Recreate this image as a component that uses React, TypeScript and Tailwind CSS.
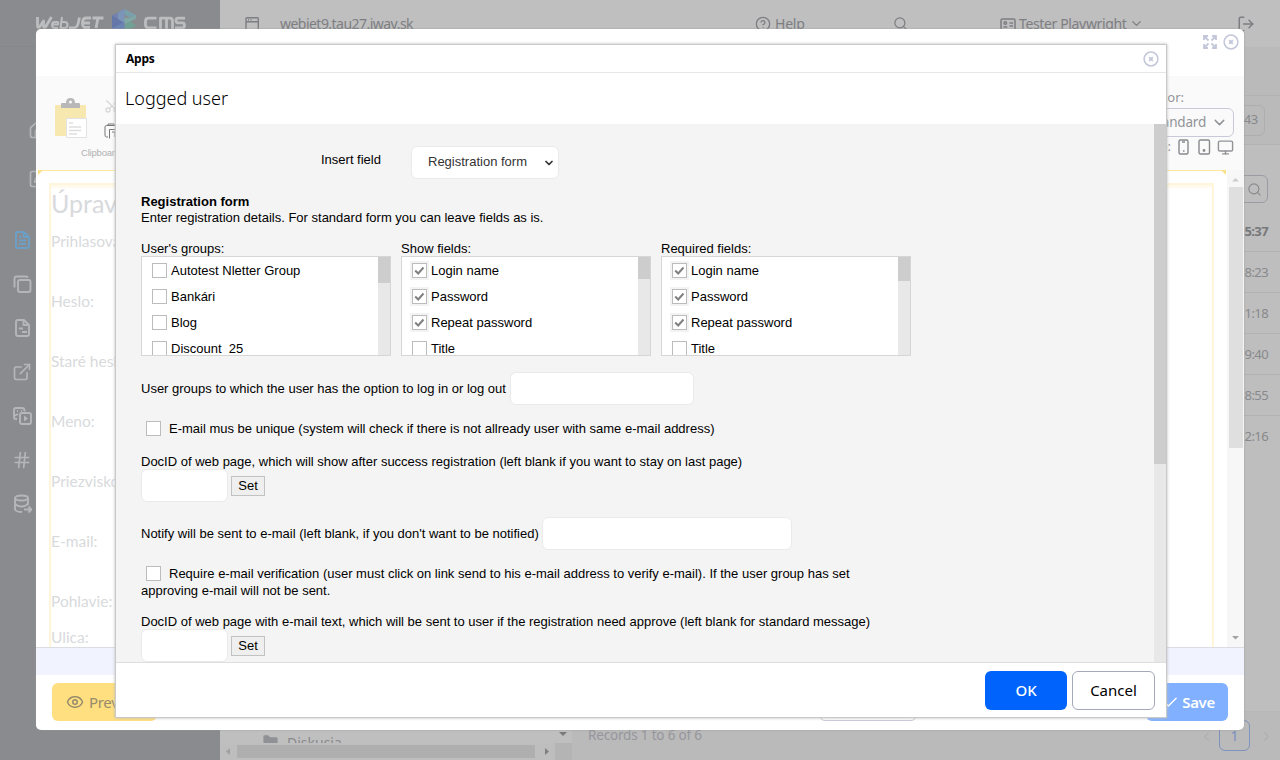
import React from "react";
import {
  ExternalLink, Hash, House, SquarePen, Search, CircleHelp, LogOut,
  ChevronDown, ChevronLeft, ChevronRight, Monitor,
  Eye, Check, Scissors, Folder,
} from "lucide-react";

const times = ["5:37", "8:23", "1:18", "9:40", "8:55", "2:16"];

function Logo() {
  return (
    <svg className="ml-[34px] mt-[6px] h-[32px] w-[154px]" viewBox="34 6 154 32">
      <g fill="none" stroke="#bcbdbf" strokeWidth="2.8" strokeLinejoin="round" strokeLinecap="butt">
        <path d="M37.500 17v9q0 2 2 1l4-6v5q0 2 2 1l6-10" />
        <path d="M52 24.500h6q1-2.500-1-2.500h-2q-3 0-3 3t3 3h3M62 17l-1.500 11h4q3 0 3-3t-3-3h-3" strokeWidth="2" />
        <path d="M69 28h4q4 0 5-4l1.500-6.500M91 18h-5q-3 0-3.500 4t2 5.500H90M83 23h7M92.500 18h11M98 18l-2 10" />
        <path d="M156.500 18.200h-8q-3 0-3 3v3.600q0 3 3 3h8M160.500 29V18.200h9.500q2.500 0 2.500 3V29M166.500 19v10M185 18.200h-7q-2 0-2 2.300t2 2.300h4.500q2 0 2 2.500t-2 2.500H175" />
      </g>
      <path fill="#7383ad" d="M112 15.500l12.500-6.500v7L112 22.500z" />
      <path fill="#6577a9" d="M112 15.500l12.500 7-12.500 6z" />
      <path fill="#7b95b9" d="M124.500 9v14l-6.500-4v-6.500z" />
      <path fill="#7aa0ac" d="M124.500 9l11.500 6-5.500 3-6-3.500z" />
      <path fill="#80a9a6" d="M136 15v3.500l-11.500 6V18l6 0z" />
      <path fill="#71a095" d="M124.500 24.500l5.500-3 6 3.500-6 5h-5.500z" />
      <path fill="#6c84b3" d="M112 28.500l12.500-6.500v8H112z" />
    </svg>
  );
}

function DocIcon({ className = "", alt = false }: { className?: string; alt?: boolean }) {
  return (
    <svg className={className} width="20" height="20" viewBox="0 0 20 20" fill="none" stroke="currentColor" strokeWidth="1.900" strokeLinejoin="round">
      <path d="M12 2H6Q4 2 4 4v12q0 2 2 2h9q2 0 2-2V7zM11.500 2v5h5" />
      {alt ? <path d="M7 10.500h4M10 14h5" /> : <path d="M7 10.500h7M7 14h7M7 7h2" />}
    </svg>
  );
}

function Sidebar() {
  return (
    <aside className="flex w-[220px] flex-col bg-[#8a8b8f] text-[#b5b6b9]">
      <div className="h-[47px] border-b border-[#86878b]"><Logo /></div>
      <div className="ml-[28px] mt-[73px] flex h-[69px] flex-col justify-between">
        <House size={20} /><SquarePen size={20} />
      </div>
      <div className="ml-[12px] mt-[41px] flex flex-col gap-6">
        <DocIcon className="text-[#6c9fc6]" />
        <svg width="20" height="20" viewBox="0 0 20 20" fill="none" stroke="currentColor" strokeWidth="1.900"><rect x="6" y="6" width="12.500" height="12" rx="2" /><path d="M2.500 13.500V4.500q0-2 2-2h9.500q1.500 0 1.500 1.500" /></svg>
        <DocIcon alt />
        <ExternalLink size={20} />
        <svg width="20" height="20" viewBox="0 0 20 20" fill="none" stroke="currentColor" strokeWidth="1.900">
          <path d="M5 13H4Q2 13 2 11V4Q2 2 4 2H10Q12.500 2 12.500 4.500V5.500M2 10l4-2M5 5h1M9 5h1" />
          <rect x="8" y="7" width="11" height="11" rx="2" /><path fill="currentColor" strokeWidth="0" d="M12 9.500v6l4-3z" />
        </svg>
        <Hash size={20} />
        <svg width="20" height="20" viewBox="0 0 20 20" fill="none" stroke="currentColor" strokeWidth="1.900">
          <ellipse cx="9.500" cy="4" rx="6.500" ry="2.500" /><path d="M3 4v11.500q1 2.500 7 2.500M16 4V11M3 9.500q2 3 6.500 3t6.500-3M12 15.500h7M16.500 12.500l3 3-3 3" />
        </svg>
      </div>
    </aside>
  );
}

function TopBar() {
  return (
    <header className="flex h-[47px] shrink-0 items-center bg-[#bfbfbf] pl-[24px] text-[14px] text-[#7d7e82]">
      <svg width="16" height="16" viewBox="0 0 16 16" fill="none" stroke="currentColor" strokeWidth="1.400"><rect x="2" y="1.700" width="12.300" height="13" rx="1" /><path d="M2 5.700h12M4 3.700h1M6.500 3.700h1" /></svg>
      <span className="ml-[20px] w-[475px] tracking-[-0.53px]">webjet9.tau27.iway.sk</span>
      <span className="flex w-[138px] items-center gap-1 tracking-[-0.2px]"><CircleHelp size={16} />Help</span>
      <Search size={15} />
      <span className="ml-[92px] flex w-[237px] items-center gap-[3px] whitespace-nowrap tracking-[-0.36px]">
        <svg className="shrink-0" width="16" height="16" viewBox="0 0 16 16" fill="none" stroke="currentColor" strokeWidth="1.500"><rect x="1" y="3" width="14" height="11" rx="1.500" /><circle cx="5.300" cy="7" r="1.300" /><path d="M3.300 11h4M9.500 7h3.500M9.500 10h3.500" /></svg>
        Tester Playwright<ChevronDown size={15} />
      </span>
      <LogOut size={18} />
    </header>
  );
}

function BackPage() {
  return (
    <div className="flex h-[760px] w-[1280px]">
      <Sidebar />
      <main className="flex flex-1 flex-col bg-[#bebebe] text-[#88898c]">
        <TopBar />
        <div className="h-[49px] border-b border-[#b2b2b2] bg-[#bababa]" />
        <div className="flex h-[49px] items-center justify-end border-b border-[#b2b2b2] bg-[#bababa] pr-[15px]">
          <span className="flex h-[31px] w-[80px] items-center justify-end rounded-[6px] border border-[#aeaeb1] pr-[6px] text-[13px] tracking-[-0.3px]">43</span>
        </div>
        <div className="flex h-[66px] items-center justify-end pr-[12px]">
          <span className="mt-[22px] flex h-[28px] w-[70px] items-center justify-end rounded-[6px] border border-[#9b9ca3] pr-[5px]"><Search size={15} strokeWidth={1.800} /></span>
        </div>
        <div className="flex flex-col text-[13px]">
          {times.map((t, i) => (
            <div key={t} className={"flex h-[41px] items-center justify-end pr-[12px] tracking-[-0.6px] " + (i === 0 ? "border-b border-[#b2b2b2] pt-[1px] font-bold text-[#77787b]" : i < 5 ? "border-b border-[#b2b2b2] pt-[1px]" : "")}>{t}</div>
          ))}
        </div>
        <div className="mt-auto flex h-[49px]">
          <div className="flex w-[352px] flex-col">
            <div className="flex h-[32px] items-end overflow-hidden bg-[#bfbfbf]">
              <div className="ml-[42px] flex h-[12px] w-[292px] items-start gap-2 overflow-hidden pt-[2px] text-[14px] leading-[20px]">
                <Folder size={17} fill="#909194" strokeWidth={0} className="shrink-0" />
                <span>Diskusia</span>
              </div>
              <svg width="18" height="32" viewBox="0 0 18 32"><path fill="#7b7b7b" d="M5 21h8l-4 4z" /></svg>
            </div>
            <div className="flex h-[17px] items-center">
              <svg width="17" height="17" viewBox="0 0 17 17"><path fill="#a0a0a0" d="M10 5v7L6 8.500z" /></svg>
              <div className="h-[13px] w-[298px] bg-[#afafaf]" />
              <svg width="20" height="17" viewBox="0 0 20 17"><path fill="#808080" d="M10 5v7l4-3.500z" /></svg>
              <div className="ml-auto h-full w-[17px] bg-[#b4b4b4]" />
            </div>
          </div>
          <div className="flex flex-1 items-center border-t border-[#b7b7b7] bg-[#bababa] pl-[16px]">
            <span className="mt-[-2px] flex-1 text-[13.500px] tracking-[-0.18px] text-[#95969c]">Records 1 to 6 of 6</span>
            <ChevronLeft size={15} className="mr-[5px] text-[#b0b0b0]" />
            <span className="mt-[-1px] flex h-[31px] w-[31px] items-center justify-center rounded-[6px] border border-[#7e92ba] text-[14px] text-[#7890bd]">1</span>
            <ChevronRight size={15} className="ml-[9px] mr-[6px] text-[#b0b0b0]" />
          </div>
        </div>
      </main>
    </div>
  );
}

const editorRows: [string, string][] = [
  ["Prihlasovacie", "h-[60px]"], ["Heslo:", "h-[60px]"], ["Staré heslo:", "h-[60px]"], ["Meno:", "h-[60px]"],
  ["Priezvisko:", "h-[60px]"], ["E-mail:", "h-[60px]"], ["Pohlavie:", "h-[36px]"], ["Ulica:", "h-[24px]"],
];

function CloseIcon() {
  return (
    <svg width="16" height="16" viewBox="0 0 16 16" fill="none" stroke="#c3c7d9"><circle cx="8" cy="8" r="6.900" strokeWidth="1.500" /><path d="M6.200 6.200l3.600 3.600M9.800 6.200L6.200 9.800" strokeWidth="1.800" /></svg>
  );
}

function ExpandIcon() {
  return (
    <svg width="16" height="16" viewBox="0 0 16 16" stroke="#c3c7d9" fill="none" strokeWidth="1.800">
      <path d="M2 6V2h4M2 2l4.500 4.500M10 2h4v4M14 2L9.500 6.500M2 10v4h4M2 14l4.500-4.500M10 14h4v-4M14 14L9.500 9.500" />
    </svg>
  );
}

function EditorDialog() {
  return (
    <section className="absolute left-[36px] top-[29px] flex h-[701px] w-[1208px] flex-col overflow-hidden rounded-[5px] bg-white shadow-[0_0_2px_#999]">
      <div className="flex h-[47px] shrink-0 justify-end gap-[5px] pr-[5px] pt-[5px]">
        <ExpandIcon />
        <CloseIcon />
      </div>
      <div className="flex h-[94px] shrink-0 justify-between bg-[#fafafa]">
        <div className="flex flex-col">
          <div className="ml-[18px] mt-[22px] flex gap-[16px]">
            <svg width="34" height="42" viewBox="0 0 34 42">
              <rect x="1" y="7" width="31" height="31" rx="1" fill="#f6e8ae" />
              <path fill="#b8b8b8" d="M7 10V6q0-1 1-1h4q0-5 4.500-5T21 5h4q1 0 1 1v4z" /><circle cx="16.500" cy="4" r="1.500" fill="#fafafa" />
              <path fill="#fff" stroke="#e2e2e2" d="M12.500 20.500h20v19h-20z" />
              <path stroke="#dedede" strokeWidth="1.500" d="M15 25h4M15 29h12M15 32.500h12M15 36h8" />
            </svg>
            <div className="flex flex-col gap-[9px] text-[#d8d8d8]">
              <Scissors size={16} className="-rotate-90" />
              <svg width="16" height="16" viewBox="0 0 16 16" fill="none" stroke="#777"><path d="M4 14H2.500Q1 14 1 12V4q0-1.500 1.500-1.500H12M4 2.500V1h6v2M5.500 15.500v-9H15M8 9h6M11 9v5" /></svg>
            </div>
          </div>
          <span className="ml-[45px] mt-[7px] font-['Liberation_Sans',sans-serif] text-[9.500px] leading-[12px] tracking-[-0.2px] text-[#b0b0b0]">Clipboard</span>
        </div>
        <div className="flex flex-col items-end pr-[10px] pt-[11px] text-[13px] text-[#929397]">
          <span className="mr-[50px] leading-[20px]">Editor:</span>
          <span className="mt-[1px] flex h-[29px] w-[110px] items-center justify-end gap-[5px] rounded-[6px] border border-[#c8cada] pr-[5px] text-[13.500px] tracking-[-0.2px]">Standard<ChevronDown size={17} /></span>
          <span className="mt-[1px] flex h-[18px] items-center">
            Size:
            <svg className="ml-[6px]" width="12" height="18" viewBox="0 0 12 18" fill="none" stroke="#88898d" strokeWidth="1.400"><rect x="2" y="2" width="9" height="14" rx="1.500" /><path d="M6 13h1.500M5 4h3" /></svg>
            <svg className="ml-[9px]" width="13" height="18" viewBox="0 0 13 18" fill="none" stroke="#88898d" strokeWidth="1.400"><rect x="1" y="2" width="10.500" height="14" rx="1.500" /><circle cx="6" cy="12.500" r=".7" /></svg>
            <Monitor size={17} className="ml-[6px]" />
          </span>
        </div>
      </div>
      <div className="flex h-[477px] shrink-0">
        <div className="flex-1 overflow-hidden bg-white">
          <svg className="ml-[2px] block" width="1188" height="5"><path d="M0 .5H1188" stroke="#fde79b" /><path d="M0 0h5L0 5zM1188 0v5l-5-5z" fill="#fbe08a" /></svg>
          <div className="ml-[13px] mt-[8px] flex h-[470px] w-[1165px] flex-col border-2 border-[#fff5da] font-['Lato',sans-serif] text-[#d8dadc] shadow-[inset_0_3px_2px_#fffaeb]">
            <div className="h-[40px] text-[25px] leading-[36px]">Úprava</div>
            {editorRows.map(([label, h]) => (
              <div key={label} className={"shrink-0 text-[15.500px] leading-[32px] " + h}>{label}</div>
            ))}
          </div>
        </div>
        <div className="flex w-[17px] flex-col items-center bg-[#f7f7f7]">
          <svg width="16" height="17" viewBox="0 0 16 17"><path fill="#ccc" d="M4 11.500h7L7.500 8z" /></svg>
          <div className="h-[261px] w-[14px] bg-[#dfdfdf]" />
          <svg className="mt-auto" width="16" height="17" viewBox="0 0 16 17"><path fill="#a3a3a3" d="M4 6h7L7.500 9.500z" /></svg>
        </div>
      </div>
      <div className="h-[28px] shrink-0 border-t border-[#dcdde2] bg-[#f1f4fe]" />
      <div className="flex h-[55px] shrink-0 items-start px-[16px] pt-[8px] text-[15px]">
        <span className="flex h-[38px] w-[105px] items-center gap-[5px] rounded-[6px] bg-[#ffdf7f] pl-[14px] tracking-[-0.3px] text-[#968c6c]"><Eye size={18} />Preview</span>
        <span className="ml-[662px] h-[38px] w-[98px] rounded-[6px] border border-[#c8cada]" />
        <span className="ml-auto flex h-[38px] w-[82px] items-center justify-end gap-[3px] rounded-[6px] bg-[#80b0ff] pr-[13px] font-semibold tracking-[-0.3px] text-white"><Check size={17} />Save</span>
      </div>
    </section>
  );
}

function Box({ checked = false }: { checked?: boolean }) {
  return (
    <span className={"flex h-[15px] w-[15px] shrink-0 items-center justify-center border border-[#bcbcbc] bg-white " + (checked ? "shadow-[0_0_0_2px_#f3f3f3]" : "")}>
      {checked && <svg width="11" height="11" viewBox="0 0 11 11"><path d="M1.200 5.500l3 3L9.500 2.500" fill="none" stroke="#808080" strokeWidth="2" /></svg>}
    </span>
  );
}

function ListBox({ title, items, checked, thumb }: { title: string; items: string[]; checked: boolean; thumb: string }) {
  return (
    <div className="w-[250px]">
      <div className="h-[15px] leading-[16px]">{title}</div>
      <div className="flex h-[100px] overflow-hidden border border-[#d6d6d6] bg-white">
        <div className="flex-1">
          {items.map((t, i) => (
            <div key={t} className="flex h-[26px] items-center gap-[4px] whitespace-pre pl-[10px]"><Box checked={checked && i < 3} /><span className="pt-[2px]">{t}</span></div>
          ))}
        </div>
        <div className="w-[12px] bg-[#e8e8e8]"><div className={"bg-[#cdcdcd] " + thumb} /></div>
      </div>
    </div>
  );
}

function Input({ w }: { w: string }) {
  return <span className={"h-[33px] rounded-[6px] border border-[#eaeaea] bg-white " + w} />;
}

function SetRow() {
  return (
    <div className="flex h-[33px] items-center gap-[3px]">
      <Input w="w-[87px]" />
      <span className="flex h-[20px] w-[34px] items-center justify-center border border-[#c2c2c2] bg-[#efefef]">Set</span>
    </div>
  );
}

const fieldNames = ["Login name", "Password", "Repeat password", "Title"];

function AppsDialog() {
  return (
    <section className="absolute left-[115px] top-[44px] flex h-[674px] w-[1052px] flex-col border border-[#c9c9c9] bg-white text-black shadow-[0_0_3px_#bbb]">
      <div className="flex h-[28px] shrink-0 items-center justify-between border-b border-[#e6e6e6] pl-[10px] pr-[7px]">
        <span className="text-[12px] font-bold tracking-[-0.2px]">Apps</span>
        <CloseIcon />
      </div>
      <div className="flex h-[51px] shrink-0 items-center pl-[9px] text-[18px] font-light">Logged user</div>
      <div className="flex h-[538px] shrink-0 overflow-hidden bg-[#f4f4f4] font-['Liberation_Sans',sans-serif] text-[13px]">
        <div className="flex flex-1 flex-col pl-[25px] leading-[16px]">
          <div className="mt-[22px] flex h-[33px] shrink-0 pl-[180px]">
            <span className="mt-[6px] w-[90px]">Insert field</span>
            <span className="flex h-[33px] w-[148px] items-center justify-between rounded-[6px] border border-[#eaeaea] bg-white pl-[16px] pr-[3px] text-[#333]">
              <span className="mt-[-2px]">Registration form</span><ChevronDown size={12} strokeWidth={3.500} />
            </span>
          </div>
          <div className="mt-[15px] font-bold">Registration form</div>
          <div>Enter registration details. For standard form you can leave fields as is.</div>
          <div className="mt-[15px] flex gap-[10px]">
            <ListBox title="User's groups:" items={["Autotest Nletter Group", "Bankári", "Blog", "Discount  25"]} checked={false} thumb="h-[26px]" />
            <ListBox title="Show fields:" items={fieldNames} checked thumb="h-[22px]" />
            <ListBox title="Required fields:" items={fieldNames} checked thumb="h-[24px]" />
          </div>
          <div className="mt-[16px] flex h-[33px] shrink-0 items-center gap-[4px]">User groups to which the user has the option to log in or log out <Input w="w-[184px]" /></div>
          <div className="mt-[15px] flex h-[17px] items-center gap-[8px] pl-[5px]"><Box />E-mail mus be unique (system will check if there is not allready user with same e-mail address)</div>
          <div className="mt-[17px] h-[15px]">DocID of web page, which will show after success registration (left blank if you want to stay on last page)</div>
          <SetRow />
          <div className="mt-[15px] flex h-[33px] shrink-0 items-center gap-[3px]">Notify will be sent to e-mail (left blank, if you don't want to be notified) <Input w="w-[250px]" /></div>
          <div className="mt-[15px] flex h-[17px] items-center gap-[8px] pl-[5px]"><Box />Require e-mail verification (user must click on link send to his e-mail address to verify e-mail). If the user group has set</div>
          <div className="mt-[1px]">approving e-mail will not be sent.</div>
          <div className="mt-[15px] h-[15px]">DocID of web page with e-mail text, which will be sent to user if the registration need approve (left blank for standard message)</div>
          <SetRow />
        </div>
        <div className="w-[12px] bg-[#e8e8e8]"><div className="h-[340px] bg-[#cdcdcd]" /></div>
      </div>
      <div className="flex flex-1 items-center justify-end gap-[5px] border-t border-[#dedede] pr-[11px] text-[15px]">
        <span className="flex h-[39px] w-[82px] items-center justify-center rounded-[6px] bg-[#0063fb] font-medium text-white">OK</span>
        <span className="flex h-[39px] w-[83px] items-center justify-center rounded-[6px] border border-[#a5a8b8]">Cancel</span>
      </div>
    </section>
  );
}

export default function App() {
  return (
    <div className="relative h-[760px] w-[1280px] overflow-hidden font-['Noto_Sans',sans-serif]">
      <BackPage />
      <EditorDialog />
      <AppsDialog />
    </div>
  );
}
